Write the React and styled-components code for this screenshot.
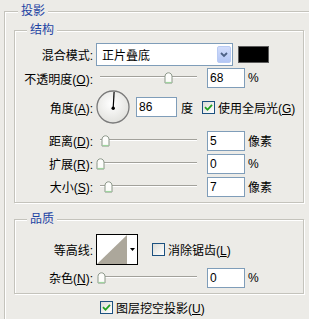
import React from "react";
import styled, { createGlobalStyle } from "styled-components";

const BG = "#ecebe7";

const GlobalStyle = createGlobalStyle`
  html, body { margin: 0; padding: 0; }
  body {
    background: ${BG};
    width: 309px;
    height: 319px;
    overflow: hidden;
    font-family: "Liberation Sans", "Noto Sans CJK SC", sans-serif;
    font-size: 12px;
    color: #000;
  }
`;

const Group = styled.fieldset`
  margin: ${(p) => p.$mt || 0}px 0 0 ${(p) => p.$ml}px;
  padding: 0 0 ${(p) => p.$pb || 0}px;
  width: ${(p) => p.$w}px;
  box-sizing: border-box;
  min-inline-size: 0;
  border: 1px solid #c4c3bc;
  box-shadow: 1px 1px 0 #fff, inset 1px 1px 0 #fff;
`;

const Legend = styled.legend`
  margin-left: ${(p) => p.$ml}px;
  padding: 0 3px;
  height: 15px;
  line-height: 15px;
  color: #1d43a3;
  background: ${BG};
`;

const Body = styled.div`
  padding: ${(p) => p.$pt}px 0 ${(p) => p.$pb}px;
`;

const Row = styled.div`
  display: flex;
  align-items: center;
  height: ${(p) => p.$h}px;
  margin-top: ${(p) => p.$mt || 0}px;
  white-space: nowrap;
`;

const BottomRow = styled(Row)`
  padding-left: 95px;
`;

const Label = styled.span`
  flex: none;
  width: 78px;
  margin-right: 3px;
  text-align: right;
`;

const Select = styled.div`
  flex: none;
  width: 137px;
  height: 23px;
  box-sizing: border-box;
  border: 1px solid #7f9db9;
  background: #fff;
  display: flex;
  align-items: center;
  justify-content: space-between;
  padding: 0 1px 0 5px;
`;

const DropButton = styled.span`
  width: 14px;
  height: 17px;
  box-sizing: border-box;
  border: 1px solid #b9cbf3;
  border-radius: 2px;
  background: linear-gradient(#d2ddfb, #b3c6f5);
  display: flex;
  align-items: center;
  justify-content: center;
`;

const Swatch = styled.span`
  flex: none;
  width: 31px;
  height: 17px;
  margin-left: 5px;
  box-sizing: border-box;
  border: 1px solid #5c5c5c;
  background: #000;
`;

const Slider = styled.div`
  flex: none;
  position: relative;
  width: 104px;
  height: 100%;
  margin-right: 7px;

  &::before {
    content: "";
    position: absolute;
    left: 4px;
    right: 3px;
    top: calc(50% - 2px);
    border-top: 1px solid #a2a19b;
    border-bottom: 1px solid #fff;
  }
`;

const Thumb = styled.svg`
  position: absolute;
  top: calc(50% - 6px);
`;

const Field = styled.div`
  flex: none;
  width: ${(p) => p.$w || 38}px;
  height: 20px;
  box-sizing: border-box;
  border: 1px solid #7f9db9;
  background: #fff;
  padding-left: 2px;
  display: flex;
  align-items: center;
  margin-left: ${(p) => p.$ml || 0}px;
`;

const Unit = styled.span`
  margin-left: ${(p) => p.$ml || 3}px;
`;

const Box = styled.span`
  flex: none;
  width: 13px;
  height: 13px;
  box-sizing: border-box;
  border: 1px solid #1c5180;
  background: linear-gradient(135deg, #dcdcd7, #fff);
  display: inline-flex;
  align-items: center;
  justify-content: center;
  margin-left: ${(p) => p.$ml || 0}px;
  margin-right: 3px;
`;

const Contour = styled.div`
  flex: none;
  width: 42px;
  height: 31px;
  box-sizing: border-box;
  border: 1px solid #000;
  background: #fff;
  display: flex;
  align-items: stretch;
`;

const ContourArrow = styled.span`
  flex: 1;
  display: flex;
  align-items: center;
  justify-content: center;
`;

const Dial = () => (
  <svg width="34" height="34" viewBox="0 0 34 34">
    <defs>
      <radialGradient id="dialFill" cx="45%" cy="40%" r="60%">
        <stop offset="0" stopColor="#ffffff" />
        <stop offset="1" stopColor="#e2e2de" />
      </radialGradient>
    </defs>
    <circle cx="17" cy="17" r="16" fill="url(#dialFill)" stroke="#7a7a7a" strokeWidth="1.3" />
    <line x1="17.2" y1="18" x2="18.1" y2="2" stroke="#000" strokeWidth="1.2" />
    <circle cx="17.2" cy="18.3" r="1.7" fill="#000" />
  </svg>
);

const CheckBox = ({ checked, ml }) => (
  <Box $ml={ml}>
    {checked && (
      <svg width="9" height="9" viewBox="0 0 9 9">
        <path d="M1 4.2 L3.5 6.8 L8 1.8" fill="none" stroke="#21a121" strokeWidth="1.8" />
      </svg>
    )}
  </Box>
);

const SliderControl = ({ left }) => (
  <Slider>
    <Thumb width="9" height="12" viewBox="0 0 9 12" style={{ left }}>
      <path
        d="M1 11 V4.5 C1 2.3 2.6 0.8 4.5 0.8 C6.4 0.8 8 2.3 8 4.5 V11 Z"
        fill="#fdfdfb"
        stroke="#8a9688"
        strokeWidth="1"
      />
      <line x1="1.5" y1="10.5" x2="7.5" y2="10.5" stroke="#9ed69e" strokeWidth="1.2" />
    </Thumb>
  </Slider>
);

const SliderRow = ({ label, thumb, value, unit, h = 23, mt }) => (
  <Row $h={h} $mt={mt}>
    <Label>{label}</Label>
    <SliderControl left={thumb} />
    <Field>{value}</Field>
    <Unit>{unit}</Unit>
  </Row>
);

export default function App() {
  return (
    <>
      <GlobalStyle />
      <Group $ml={4} $mt={4} $w={320} $pb={40}>
        <Legend $ml={13}>投影</Legend>

        <Group $ml={9} $mt={4} $w={290}>
          <Legend $ml={12}>结构</Legend>
          <Body $pt={5} $pb={4}>
            <Row $h={23}>
              <Label>混合模式:</Label>
              <Select>
                <span>正片叠底</span>
                <DropButton>
                  <svg width="8" height="6" viewBox="0 0 8 6">
                    <path d="M1 1 L4 4 L7 1" fill="none" stroke="#4d6185" strokeWidth="1.8" />
                  </svg>
                </DropButton>
              </Select>
              <Swatch />
            </Row>
            <SliderRow
              h={24}
              label={<>不透明度(<u>O</u>):</>}
              thumb={68}
              value="68"
              unit="%"
            />
            <Row $h={34}>
              <Label>角度(<u>A</u>):</Label>
              <Dial />
              <Field $w={41} $ml={6}>86</Field>
              <Unit $ml={4}>度</Unit>
              <CheckBox checked ml={9} />
              <span>使用全局光(<u>G</u>)</span>
            </Row>
            <SliderRow mt={5} label={<>距离(<u>D</u>):</>} thumb={5} value="5" unit="像素" />
            <SliderRow label={<>扩展(<u>R</u>):</>} thumb={0} value="0" unit="%" />
            <SliderRow label={<>大小(<u>S</u>):</>} thumb={8} value="7" unit="像素" />
          </Body>
        </Group>

        <Group $ml={9} $mt={9} $w={290}>
          <Legend $ml={12}>品质</Legend>
          <Body $pt={6} $pb={4}>
            <Row $h={32}>
              <Label>等高线:</Label>
              <Contour>
                <svg width="30" height="29" viewBox="0 0 30 29">
                  <polygon points="0,29 30,0 30,29" fill="#aca79b" />
                </svg>
                <ContourArrow>
                  <svg width="5" height="3" viewBox="0 0 5 3">
                    <polygon points="0,0 5,0 2.5,3" fill="#000" />
                  </svg>
                </ContourArrow>
              </Contour>
              <CheckBox ml={14} />
              <span>消除锯齿(<u>L</u>)</span>
            </Row>
            <SliderRow mt={1} label={<>杂色(<u>N</u>):</>} thumb={1} value="0" unit="%" />
          </Body>
        </Group>

        <BottomRow $h={15} $mt={6}>
          <CheckBox checked />
          <span>图层挖空投影(<u>U</u>)</span>
        </BottomRow>
      </Group>
    </>
  );
}
